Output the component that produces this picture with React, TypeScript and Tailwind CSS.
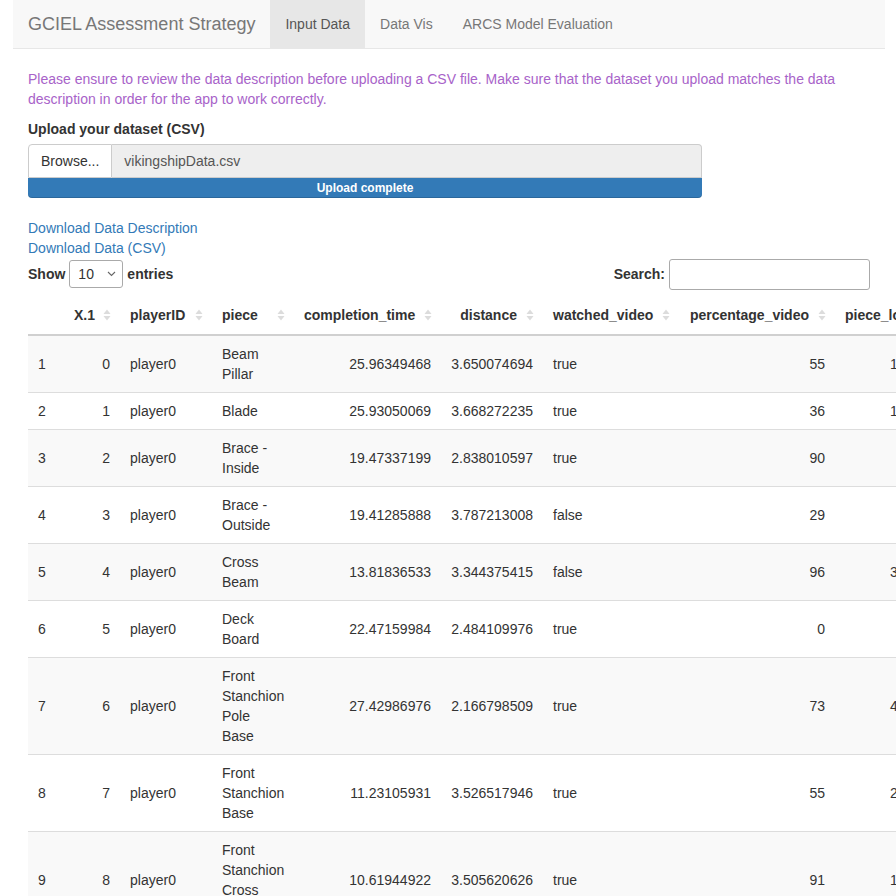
import React from "react";

type Row = {
  n: number;
  x: number;
  piece: string[];
  ct: string;
  dist: string;
  wv: string;
  pv: string;
  pl: string;
};

const rows: Row[] = [
  { n: 1, x: 0, piece: ["Beam", "Pillar"], ct: "25.96349468", dist: "3.650074694", wv: "true", pv: "55", pl: "1" },
  { n: 2, x: 1, piece: ["Blade"], ct: "25.93050069", dist: "3.668272235", wv: "true", pv: "36", pl: "1" },
  { n: 3, x: 2, piece: ["Brace -", "Inside"], ct: "19.47337199", dist: "2.838010597", wv: "true", pv: "90", pl: "" },
  { n: 4, x: 3, piece: ["Brace -", "Outside"], ct: "19.41285888", dist: "3.787213008", wv: "false", pv: "29", pl: "" },
  { n: 5, x: 4, piece: ["Cross", "Beam"], ct: "13.81836533", dist: "3.344375415", wv: "false", pv: "96", pl: "3" },
  { n: 6, x: 5, piece: ["Deck", "Board"], ct: "22.47159984", dist: "2.484109976", wv: "true", pv: "0", pl: "" },
  { n: 7, x: 6, piece: ["Front", "Stanchion", "Pole", "Base"], ct: "27.42986976", dist: "2.166798509", wv: "true", pv: "73", pl: "4" },
  { n: 8, x: 7, piece: ["Front", "Stanchion", "Base"], ct: "11.23105931", dist: "3.526517946", wv: "true", pv: "55", pl: "2" },
  { n: 9, x: 8, piece: ["Front", "Stanchion", "Cross", "Beam"], ct: "10.61944922", dist: "3.505620626", wv: "true", pv: "91", pl: "1" },
];

function SortIcon() {
  return (
    <svg
      width="8"
      height="14"
      viewBox="0 0 8 14"
      className="absolute right-[9px] top-1/2 -translate-y-1/2"
    >
      <polygon points="0.5,6 4,1.5 7.5,6" fill="#dcdcdc" />
      <polygon points="0.5,8 4,12.5 7.5,8" fill="#dcdcdc" />
    </svg>
  );
}

const cols: { label: string; w: number; align: "left" | "right"; sort: boolean }[] = [
  { label: "", w: 36, align: "left", sort: false },
  { label: "X.1", w: 56, align: "right", sort: true },
  { label: "playerID", w: 92, align: "left", sort: true },
  { label: "piece", w: 82, align: "left", sort: true },
  { label: "completion_time", w: 147, align: "right", sort: true },
  { label: "distance", w: 102, align: "right", sort: true },
  { label: "watched_video", w: 136, align: "left", sort: true },
  { label: "percentage_video", w: 156, align: "right", sort: true },
  { label: "piece_location", w: 200, align: "left", sort: true },
];

export default function App() {
  const font = { fontFamily: '"Liberation Sans", Arial, Helvetica, sans-serif' };
  return (
    <div
      className="w-[896px] h-[896px] overflow-hidden bg-white text-[14px] leading-[20px] text-[#333]"
      style={font}
    >
      <div className="pl-[13px] w-[885px]">
        {/* Navbar */}
        <div className="flex h-[49px] bg-[#f8f8f8] border-b border-[#e7e7e7]">
          <div className="flex items-center px-[15px] text-[18px] text-[#777] h-[48px]">
            GCIEL Assessment Strategy
          </div>
          <div className="flex items-center px-[15px] h-[48px] bg-[#e7e7e7] text-[#555]">
            Input Data
          </div>
          <div className="flex items-center px-[15px] h-[48px] text-[#777]">Data Vis</div>
          <div className="flex items-center px-[15px] h-[48px] text-[#777]">
            ARCS Model Evaluation
          </div>
        </div>

        {/* Content */}
        <div className="px-[15px] pt-[20px]">
          <p className="text-[#a863c9] w-[820px]">
            Please ensure to review the data description before uploading a CSV file. Make sure that the dataset you upload matches the data description in order for the app to work correctly.
          </p>
          <div className="mt-[10px] font-bold">Upload your dataset (CSV)</div>
          <div className="mt-[5px] w-[674px]">
            <div className="flex h-[34px]">
              <div className="flex items-center px-[12px] bg-white border border-[#ccc] rounded-tl-[4px] text-[#333]">
                Browse...
              </div>
              <div className="flex-1 flex items-center px-[12px] bg-[#eee] border border-l-0 border-[#ccc] rounded-tr-[4px] text-[#555]">
                vikingshipData.csv
              </div>
            </div>
            <div className="h-[20px] bg-[#337ab7] rounded-b-[4px] flex items-center justify-center text-white text-[12px] font-bold shadow-[inset_0_-1px_0_rgba(0,0,0,0.15)]">
              Upload complete
            </div>
          </div>

          <div className="mt-[20px] text-[#337ab7]">
            <div>Download Data Description</div>
            <div>Download Data (CSV)</div>
          </div>

          <div className="flex items-center justify-between h-[32px] mt-[0px]">
            <div className="flex items-center font-bold">
              <span>Show</span>
              <div className="mx-[4px] w-[54px] h-[28px] border border-[#aaa] rounded-[3px] flex items-center justify-between pl-[8px] pr-[6px] font-normal bg-white">
                <span>10</span>
                <svg width="9" height="6" viewBox="0 0 9 6">
                  <polyline points="1,1 4.5,4.5 8,1" fill="none" stroke="#666" strokeWidth="1.1" />
                </svg>
              </div>
              <span>entries</span>
            </div>
            <div className="flex items-center font-bold">
              <span>Search:</span>
              <div className="ml-[4px] w-[201px] h-[31px] border border-[#aaa] rounded-[3px] bg-white" />
            </div>
          </div>

          {/* Table */}
          <table className="mt-[6px] border-collapse table-fixed" style={{ width: 1007 }}>
            <colgroup>
              {cols.map((c, i) => (
                <col key={i} style={{ width: c.w }} />
              ))}
            </colgroup>
            <thead>
              <tr>
                {cols.map((c, i) => (
                  <th
                    key={i}
                    className={`relative font-bold py-[9px] pl-[10px] pr-[26px] border-b-2 border-[#d0d0d0] whitespace-nowrap overflow-hidden ${
                      c.align === "right" ? "text-right" : "text-left"
                    }`}
                  >
                    {c.label}
                    {c.sort && <SortIcon />}
                  </th>
                ))}
              </tr>
            </thead>
            <tbody>
              {rows.map((r, idx) => (
                <tr key={r.n} className={idx % 2 === 0 ? "bg-[#f9f9f9]" : "bg-white"}>
                  <td className="px-[10px] py-[8px] border-t border-[#ddd] align-middle text-left">{r.n}</td>
                  <td className="px-[10px] py-[8px] border-t border-[#ddd] align-middle text-right">{r.x}</td>
                  <td className="px-[10px] py-[8px] border-t border-[#ddd] align-middle text-left">player0</td>
                  <td className="px-[10px] py-[8px] border-t border-[#ddd] align-middle text-left whitespace-nowrap">
                    {r.piece.map((p, i) => (
                      <div key={i}>{p}</div>
                    ))}
                  </td>
                  <td className="px-[10px] py-[8px] border-t border-[#ddd] align-middle text-right">{r.ct}</td>
                  <td className="px-[10px] py-[8px] border-t border-[#ddd] align-middle text-right">{r.dist}</td>
                  <td className="px-[10px] py-[8px] border-t border-[#ddd] align-middle text-left">{r.wv}</td>
                  <td className="px-[10px] py-[8px] border-t border-[#ddd] align-middle text-right">{r.pv}</td>
                  <td className="pl-[55px] pr-[10px] py-[8px] border-t border-[#ddd] align-middle text-left whitespace-nowrap">
                    {r.pl}
                  </td>
                </tr>
              ))}
            </tbody>
          </table>
        </div>
      </div>
    </div>
  );
}
